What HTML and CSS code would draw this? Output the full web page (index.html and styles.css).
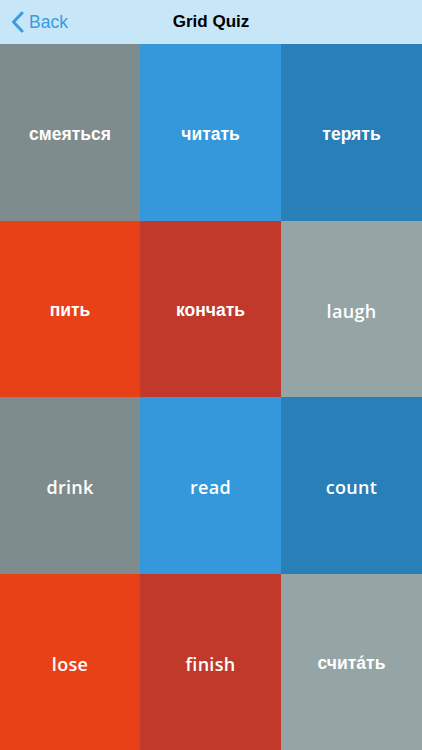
FILE: index.html
```html
<!DOCTYPE html>
<html lang="en">
<head>
    <meta charset="UTF-8">
    <meta name="viewport" content="width=device-width, initial-scale=1.0">
    <title>Grid Quiz</title>
    <link rel="stylesheet" href="styles.css">
</head>
<body>
    <div class="screen">
        <!-- top navigation -->
        <div class="nav-bar">
            <a class="back" href="#">
                <svg class="chevron" width="13" height="22" viewBox="0 0 13 22">
                    <path d="M11 2 L2.5 11 L11 20" fill="none" stroke="#3a9be0" stroke-width="3" stroke-linecap="round" stroke-linejoin="round"/>
                </svg>
                <span>Back</span>
            </a>
            <div class="nav-title">Grid Quiz</div>
        </div>

        <!-- quiz tiles -->
        <div class="grid">
            <div class="tile gray ru">смеяться</div>
            <div class="tile blue ru">читать</div>
            <div class="tile navy ru">терять</div>

            <div class="tile orange ru">пить</div>
            <div class="tile red ru">кончать</div>
            <div class="tile silver en">laugh</div>

            <div class="tile gray en">drink</div>
            <div class="tile blue en">read</div>
            <div class="tile navy en">count</div>

            <div class="tile orange en">lose</div>
            <div class="tile red en">finish</div>
            <div class="tile silver ru">счита́ть</div>
        </div>
    </div>
</body>
</html>
```

FILE: styles.css
```css
/* page */
html, body {
    margin: 0;
    padding: 0;
    height: 100%;
}

body {
    font-family: "Liberation Sans", Arial, sans-serif;
}

.screen {
    display: flex;
    flex-direction: column;
    height: 750px;
}

/* navigation bar */
.nav-bar {
    position: relative;
    height: 44px;
    flex: none;
    background-color: #c7e6f8;
    display: flex;
    align-items: center;
    justify-content: center;
}

.back {
    position: absolute;
    left: 11px;
    top: 0;
    height: 44px;
    display: flex;
    align-items: center;
    gap: 5px;
    color: #3a9be0;
    text-decoration: none;
    font-size: 17.5px;
}

.chevron {
    display: block;
}

.nav-title {
    font-size: 17px;
    font-weight: bold;
    color: #000;
}

/* tiles */
.grid {
    flex: 1;
    display: grid;
    grid-template-columns: 140px 141px 141px;
    grid-template-rows: repeat(4, 1fr);
}

.tile {
    display: flex;
    align-items: center;
    justify-content: center;
    padding-top: 4px;
    color: #fff;
}

.tile.ru {
    font-family: "Liberation Sans", Arial, sans-serif;
    font-weight: bold;
    font-size: 17.5px;
}

.tile.en {
    font-family: "Open Sans", sans-serif;
    font-weight: 600;
    font-size: 18px;
    letter-spacing: 0.3px;
}

.gray { background-color: #7f8c8d; }
.blue { background-color: #3498db; }
.navy { background-color: #2980b9; }
.orange { background-color: #e84118; }
.red { background-color: #c0392b; }
.silver { background-color: #95a5a6; }
```
